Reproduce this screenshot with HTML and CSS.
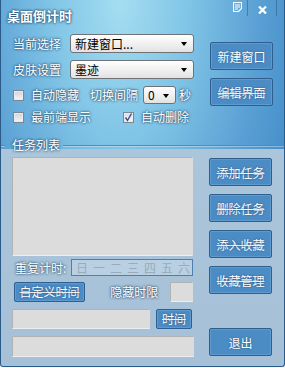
FILE: index.html
```html
<!DOCTYPE html>
<html lang="zh-CN">
<head>
<meta charset="UTF-8">
<title>桌面倒计时</title>
<link rel="stylesheet" href="styles.css">
</head>
<body>

<div class="window">
    <div class="titlebar">
        <div class="title">桌面倒计时</div>
        <div class="sys">
            <span class="sys-btn menu">
                <svg width="9" height="10" viewBox="0 0 9 10">
                    <path d="M0.5 0.5h8v6l-3 3h-5z" fill="none" stroke="#fff" stroke-width="1.2"/>
                    <path d="M2 3h5M2 5h5M2 7h3" stroke="#fff" stroke-width="1"/>
                </svg>
            </span>
            <span class="sys-btn close">
                <svg width="9" height="8" viewBox="0 0 9 8">
                    <path d="M1 0.5l7 7M8 0.5l-7 7" stroke="#fff" stroke-width="2.2"/>
                </svg>
            </span>
        </div>
    </div>

    <div class="top">
        <div class="settings">
            <div class="row">
                <span class="label">当前选择</span>
                <div class="select wide">新建窗口...<i class="arrow"></i></div>
            </div>
            <div class="row">
                <span class="label">皮肤设置</span>
                <div class="select wide">墨迹<i class="arrow"></i></div>
            </div>
            <div class="row row-check">
                <span class="check"></span>
                <span class="label">自动隐藏</span>
                <span class="label interval">切换间隔</span>
                <div class="select small">0<i class="arrow"></i></div>
                <span class="label sec">秒</span>
            </div>
            <div class="row row-check last">
                <span class="check"></span>
                <span class="label">最前端显示</span>
                <span class="check checked">
                    <svg width="9" height="9" viewBox="0 0 9 9"><path d="M1.5 4.5l2 3l4-7" fill="none" stroke="#3a4f8a" stroke-width="1.4"/></svg>
                </span>
                <span class="label">自动删除</span>
            </div>
        </div>
        <div class="side">
            <button class="btn">新建窗口</button>
            <button class="btn strike">编辑界面</button>
        </div>
    </div>

    <div class="group-head">
        <span class="line short"></span>
        <span class="legend">任务列表</span>
        <span class="line"></span>
    </div>

    <div class="bottom">
        <div class="tasks">
            <div class="listbox"></div>
            <div class="repeat">
                <span class="label">重复计时:</span>
                <div class="days">
                    <span>日</span><span>一</span><span>二</span><span>三</span><span>四</span><span>五</span><span>六</span>
                </div>
            </div>
            <div class="custom">
                <button class="btn btn-sm strike custom-btn">自定义时间</button>
                <span class="label hide-label">隐藏时限</span>
                <div class="field tiny"></div>
            </div>
            <div class="time-row">
                <div class="field time-field"></div>
                <button class="btn btn-sm strike time-btn">时间</button>
            </div>
            <div class="field full"></div>
        </div>
        <div class="side side-bottom">
            <button class="btn strike">添加任务</button>
            <button class="btn strike">删除任务</button>
            <button class="btn strike">添入收藏</button>
            <button class="btn strike">收藏管理</button>
            <button class="btn exit">退出</button>
        </div>
    </div>
</div>

</body>
</html>
```

FILE: styles.css
```css
body {
    margin: 0;
    font-family: "Noto Sans CJK SC", "DejaVu Sans", sans-serif;
    font-size: 12px;
    background: #fff;
}
.window {
    width: 285px;
    height: 367px;
    box-sizing: border-box;
    border: 1px solid #2a5a88;
    border-top: none;
    border-radius: 0 0 3px 3px;
    background:
        linear-gradient(to bottom, transparent 149px, #abc6db 149px, #a6c1d7 100%),
        radial-gradient(ellipse 70% 110% at 42% 0%, #a4def1 0%, #80c4e6 35%, #5aa0d4 70%, #3f89c6 100%);
    overflow: hidden;
}
.titlebar {
    display: flex;
    justify-content: space-between;
    height: 30px;
}
.title {
    padding: 7px 0 0 6px;
    font-size: 13px;
    font-weight: bold;
    line-height: 17px;
    color: #fff;
    text-shadow: 0 0 2px #1d4668, 0 0 3px #1d4668;
}
.sys {
    display: flex;
    margin-right: 7px;
    height: 16px;
}
.sys-btn {
    display: flex;
    align-items: center;
    justify-content: center;
    border-right: 1px solid rgba(40, 80, 120, 0.45);
}
.sys-btn.menu {
    width: 20px;
    padding-bottom: 2px;
}
.sys-btn.close {
    width: 28px;
    padding-top: 3px;
}
.label {
    color: #fff;
    line-height: 16px;
    white-space: nowrap;
    text-shadow: 0 0 2px #2a4f70, 0 0 3px #2a4f70;
}
.top {
    display: flex;
}
.settings {
    width: 181px;
    padding: 4px 0 0 12px;
}
.row {
    display: flex;
    align-items: center;
    height: 19px;
    margin-bottom: 7px;
}
.row .label {
    width: 57px;
}
.row-check {
    height: 18px;
    margin-top: 3px;
    margin-bottom: 5px;
}
.row-check.last {
    height: 16px;
    margin: 0;
}
.row-check .label {
    width: auto;
    margin-left: 7px;
}
.row-check .interval {
    margin-left: 11px;
    margin-right: 5px;
}
.row-check .sec {
    margin-left: 3px;
}
.check {
    display: flex;
    flex-shrink: 0;
    align-items: center;
    justify-content: center;
    width: 9px;
    height: 9px;
    border: 1px solid #7d8790;
    background: linear-gradient(to bottom, #cfd3d8, #f4f5f6);
    box-shadow: inset 0 0 0 1px #e8eaec;
}
.check.checked {
    margin-left: 32px;
    background: linear-gradient(to bottom, #d8dde6, #f6f7fa);
}
.select {
    position: relative;
    flex-shrink: 0;
    box-sizing: border-box;
    height: 19px;
    padding-left: 4px;
    border: 1px solid #6f7378;
    border-radius: 3px;
    background: linear-gradient(to bottom, #ffffff, #eeeeee 60%, #e2e2e2);
    color: #000;
    line-height: 17px;
}
.select.wide {
    width: 124px;
}
.select.small {
    width: 33px;
    height: 18px;
    line-height: 16px;
}
.arrow {
    position: absolute;
    right: 6px;
    top: 7px;
    border-left: 3px solid transparent;
    border-right: 3px solid transparent;
    border-top: 4px solid #000;
}
.side {
    display: flex;
    flex-direction: column;
    gap: 8px;
    margin: 12px 0 0 16px;
}
.btn {
    box-sizing: border-box;
    width: 63px;
    height: 28px;
    padding: 0;
    border: 1px solid #2f5f8e;
    border-radius: 2px;
    background: #4c8cc5;
    box-shadow: inset 0 0 0 1px #5d9ad0;
    color: #fff;
    font-family: "Noto Sans CJK SC", "DejaVu Sans", sans-serif;
    font-size: 12px;
    text-shadow: 0 0 2px #23507a;
}
.strike {
    text-decoration: line-through;
    text-decoration-color: rgba(255, 255, 255, 0.85);
    text-decoration-thickness: 1px;
}
.group-head {
    display: flex;
    align-items: center;
    height: 16px;
    margin-top: 12px;
}
.line {
    flex: 1;
    height: 1px;
    background: #5f87ad;
    box-shadow: 0 1px 0 rgba(255, 255, 255, 0.35);
}
.line.short {
    flex: 0 0 4px;
}
.legend {
    padding: 0 3px 0 7px;
    color: #fff;
    line-height: 16px;
    text-shadow: 0 0 2px #2a4f70, 0 0 3px #2a4f70;
}
.bottom {
    display: flex;
}
.tasks {
    width: 181px;
    margin: 4px 0 0 11px;
}
.listbox,
.field {
    box-sizing: border-box;
    border: 1px solid #b0b2b4;
    border-bottom-color: #eceef0;
    border-right-color: #dadcde;
    background: #dcdcdc;
}
.listbox {
    height: 99px;
}
.repeat {
    display: flex;
    align-items: center;
    justify-content: space-between;
    margin-top: 3px;
    height: 17px;
}
.repeat .label {
    padding-left: 3px;
}
.days {
    display: flex;
    justify-content: space-between;
    box-sizing: border-box;
    width: 122px;
    height: 17px;
    padding: 0 2px 0 4px;
    border: 1px solid #4f7fae;
    background: #b9d0e2;
    color: #9aabb9;
    line-height: 15px;
}
.custom {
    display: flex;
    align-items: center;
    margin-top: 5px;
    height: 21px;
}
.btn-sm {
    height: 20px;
    line-height: 16px;
}
.custom-btn {
    width: 72px;
    margin-left: 2px;
}
.hide-label {
    margin-left: 25px;
}
.field.tiny {
    width: 23px;
    height: 20px;
    margin-left: 12px;
}
.time-row {
    display: flex;
    align-items: center;
    margin-top: 7px;
}
.time-field {
    width: 138px;
    height: 20px;
}
.time-btn {
    width: 36px;
    margin-left: 6px;
}
.field.full {
    width: 182px;
    height: 21px;
    margin-top: 7px;
}
.side-bottom {
    margin-top: 5px;
}
.side-bottom .exit {
    margin-top: 26px;
}
```
